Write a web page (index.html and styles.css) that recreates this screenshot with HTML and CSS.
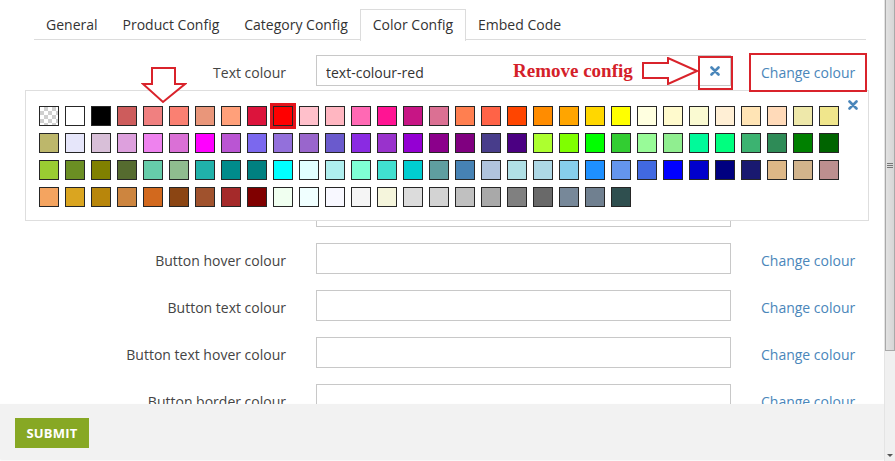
FILE: index.html
```html
<!DOCTYPE html>
<html lang="en">
<head>
<meta charset="utf-8">
<title>Color Config</title>
<link rel="stylesheet" href="styles.css">
</head>
<body>
<div class="frame">
  <div class="viewport">
    <nav class="tabs">
      <a class="tab">General</a>
      <a class="tab">Product Config</a>
      <a class="tab">Category Config</a>
      <a class="tab active">Color Config</a>
      <a class="tab">Embed Code</a>
    </nav>

    <form class="form">
      <div class="row">
        <label class="label">Text colour</label>
        <div class="field">
          <input class="input" type="text" value="text-colour-red">
          <button type="button" class="clear" aria-label="Remove">
            <svg width="10" height="10" viewBox="0 0 10 10"><path d="M1.5 1.5 L8.5 8.5 M8.5 1.5 L1.5 8.5" stroke="#4a86ba" stroke-width="2.6" stroke-linecap="round"/></svg>
          </button>
        </div>
        <a class="link">Change colour</a>
      </div>
      <div class="row">
        <label class="label">Background colour</label>
        <div class="field"><input class="input" type="text"></div>
        <a class="link">Change colour</a>
      </div>
      <div class="row">
        <label class="label">Link colour</label>
        <div class="field"><input class="input" type="text"></div>
        <a class="link">Change colour</a>
      </div>
      <div class="row">
        <label class="label">Button colour</label>
        <div class="field"><input class="input" type="text"></div>
        <span></span>
      </div>
      <div class="row">
        <label class="label">Button hover colour</label>
        <div class="field"><input class="input" type="text"></div>
        <a class="link">Change colour</a>
      </div>
      <div class="row">
        <label class="label">Button text colour</label>
        <div class="field"><input class="input" type="text"></div>
        <a class="link">Change colour</a>
      </div>
      <div class="row">
        <label class="label">Button text hover colour</label>
        <div class="field"><input class="input" type="text"></div>
        <a class="link">Change colour</a>
      </div>
      <div class="row">
        <label class="label">Button border colour</label>
        <div class="field"><input class="input" type="text"></div>
        <a class="link">Change colour</a>
      </div>
    </form>

    <div class="picker">
      <div class="swatches">
        <span class="sw sw-transparent"></span>
        <span class="sw" style="background:#ffffff"></span>
        <span class="sw" style="background:#000000"></span>
        <span class="sw" style="background:#cd5c5c"></span>
        <span class="sw" style="background:#f08080"></span>
        <span class="sw" style="background:#fa8072"></span>
        <span class="sw" style="background:#e9967a"></span>
        <span class="sw" style="background:#ffa07a"></span>
        <span class="sw" style="background:#dc143c"></span>
        <span class="sw selected" style="background:#ff0000"></span>
        <span class="sw" style="background:#ffc0cb"></span>
        <span class="sw" style="background:#ffb6c1"></span>
        <span class="sw" style="background:#ff69b4"></span>
        <span class="sw" style="background:#ff1493"></span>
        <span class="sw" style="background:#c71585"></span>
        <span class="sw" style="background:#db7093"></span>
        <span class="sw" style="background:#ff7f50"></span>
        <span class="sw" style="background:#ff6347"></span>
        <span class="sw" style="background:#ff4500"></span>
        <span class="sw" style="background:#ff8c00"></span>
        <span class="sw" style="background:#ffa500"></span>
        <span class="sw" style="background:#ffd700"></span>
        <span class="sw" style="background:#ffff00"></span>
        <span class="sw" style="background:#ffffe0"></span>
        <span class="sw" style="background:#fffacd"></span>
        <span class="sw" style="background:#fafad2"></span>
        <span class="sw" style="background:#ffefd5"></span>
        <span class="sw" style="background:#ffe4b5"></span>
        <span class="sw" style="background:#ffdab9"></span>
        <span class="sw" style="background:#eee8aa"></span>
        <span class="sw" style="background:#f0e68c"></span>

        <span class="sw" style="background:#bdb76b"></span>
        <span class="sw" style="background:#e6e6fa"></span>
        <span class="sw" style="background:#d8bfd8"></span>
        <span class="sw" style="background:#dda0dd"></span>
        <span class="sw" style="background:#ee82ee"></span>
        <span class="sw" style="background:#da70d6"></span>
        <span class="sw" style="background:#ff00ff"></span>
        <span class="sw" style="background:#ba55d3"></span>
        <span class="sw" style="background:#7b68ee"></span>
        <span class="sw" style="background:#9370db"></span>
        <span class="sw" style="background:#9966cc"></span>
        <span class="sw" style="background:#6a5acd"></span>
        <span class="sw" style="background:#8a2be2"></span>
        <span class="sw" style="background:#9932cc"></span>
        <span class="sw" style="background:#9400d3"></span>
        <span class="sw" style="background:#8b008b"></span>
        <span class="sw" style="background:#800080"></span>
        <span class="sw" style="background:#483d8b"></span>
        <span class="sw" style="background:#4b0082"></span>
        <span class="sw" style="background:#adff2f"></span>
        <span class="sw" style="background:#7fff00"></span>
        <span class="sw" style="background:#00ff00"></span>
        <span class="sw" style="background:#32cd32"></span>
        <span class="sw" style="background:#98fb98"></span>
        <span class="sw" style="background:#90ee90"></span>
        <span class="sw" style="background:#00fa9a"></span>
        <span class="sw" style="background:#00ff7f"></span>
        <span class="sw" style="background:#3cb371"></span>
        <span class="sw" style="background:#2e8b57"></span>
        <span class="sw" style="background:#008000"></span>
        <span class="sw" style="background:#006400"></span>

        <span class="sw" style="background:#9acd32"></span>
        <span class="sw" style="background:#6b8e23"></span>
        <span class="sw" style="background:#808000"></span>
        <span class="sw" style="background:#556b2f"></span>
        <span class="sw" style="background:#66cdaa"></span>
        <span class="sw" style="background:#8fbc8f"></span>
        <span class="sw" style="background:#20b2aa"></span>
        <span class="sw" style="background:#008b8b"></span>
        <span class="sw" style="background:#008080"></span>
        <span class="sw" style="background:#00ffff"></span>
        <span class="sw" style="background:#e0ffff"></span>
        <span class="sw" style="background:#afeeee"></span>
        <span class="sw" style="background:#7fffd4"></span>
        <span class="sw" style="background:#40e0d0"></span>
        <span class="sw" style="background:#00ced1"></span>
        <span class="sw" style="background:#5f9ea0"></span>
        <span class="sw" style="background:#4682b4"></span>
        <span class="sw" style="background:#b0c4de"></span>
        <span class="sw" style="background:#b0e0e6"></span>
        <span class="sw" style="background:#add8e6"></span>
        <span class="sw" style="background:#87ceeb"></span>
        <span class="sw" style="background:#1e90ff"></span>
        <span class="sw" style="background:#6495ed"></span>
        <span class="sw" style="background:#4169e1"></span>
        <span class="sw" style="background:#0000ff"></span>
        <span class="sw" style="background:#0000cd"></span>
        <span class="sw" style="background:#000080"></span>
        <span class="sw" style="background:#191970"></span>
        <span class="sw" style="background:#deb887"></span>
        <span class="sw" style="background:#d2b48c"></span>
        <span class="sw" style="background:#bc8f8f"></span>

        <span class="sw" style="background:#f4a460"></span>
        <span class="sw" style="background:#daa520"></span>
        <span class="sw" style="background:#b8860b"></span>
        <span class="sw" style="background:#cd853f"></span>
        <span class="sw" style="background:#d2691e"></span>
        <span class="sw" style="background:#8b4513"></span>
        <span class="sw" style="background:#a0522d"></span>
        <span class="sw" style="background:#a52a2a"></span>
        <span class="sw" style="background:#800000"></span>
        <span class="sw" style="background:#f0fff0"></span>
        <span class="sw" style="background:#f0ffff"></span>
        <span class="sw" style="background:#f8f8ff"></span>
        <span class="sw" style="background:#f5f5f5"></span>
        <span class="sw" style="background:#f5f5dc"></span>
        <span class="sw" style="background:#dcdcdc"></span>
        <span class="sw" style="background:#d3d3d3"></span>
        <span class="sw" style="background:#c0c0c0"></span>
        <span class="sw" style="background:#a9a9a9"></span>
        <span class="sw" style="background:#808080"></span>
        <span class="sw" style="background:#696969"></span>
        <span class="sw" style="background:#778899"></span>
        <span class="sw" style="background:#708090"></span>
        <span class="sw" style="background:#2f4f4f"></span>
      </div>
      <button type="button" class="picker-close" aria-label="Close">
        <svg width="10" height="10" viewBox="0 0 10 10"><path d="M1.5 1.5 L8.5 8.5 M8.5 1.5 L1.5 8.5" stroke="#4a86ba" stroke-width="2.6" stroke-linecap="round"/></svg>
      </button>
    </div>

    <!-- annotations -->
    <svg class="anno anno-down" width="46" height="37" viewBox="0 0 46 37">
      <polygon points="11,1 34,1 34,17 44,17 22,35 2,17 11,17" fill="#fff" stroke="#d9232b" stroke-width="2" stroke-linejoin="miter"/>
    </svg>
    <span class="anno anno-text">Remove config</span>
    <svg class="anno anno-right" width="57" height="28" viewBox="0 0 57 28">
      <polygon points="1,6 26,6 26,1 55,14 26,27 26,21 1,21" fill="#fff" stroke="#d9232b" stroke-width="2" stroke-linejoin="miter"/>
    </svg>
    <span class="anno anno-box anno-box-x"></span>
    <span class="anno anno-box anno-box-link"></span>

    <footer class="footer">
      <button type="button" class="submit">SUBMIT</button>
    </footer>
  </div>

  <div class="scrollbar">
    <div class="thumb"><span class="grip"></span></div>
    <div class="track"></div>
    <div class="arrow"></div>
  </div>
</div>
</body>
</html>
```

FILE: styles.css
```css
* { box-sizing: border-box; }

html, body {
  margin: 0;
  padding: 0;
  background: #fff;
}

body {
  font-family: "Open Sans", "Liberation Sans", sans-serif;
  font-size: 14px;
  color: #444;
  width: 895px;
  height: 461px;
  overflow: hidden;
}

.frame {
  display: flex;
  width: 895px;
  height: 461px;
}

.viewport {
  position: relative;
  width: 884px;
  height: 461px;
  overflow: hidden;
  background: #fff;
}

/* tabs */
.tabs {
  display: flex;
  margin: 9px 0 0 34px;
  width: 832px;
  border-bottom: 1px solid #dcdcdc;
  height: 31px;
}

.tab {
  display: block;
  padding: 0 11.5px;
  height: 31px;
  line-height: 30px;
  color: #333;
  border: 1px solid transparent;
  border-bottom: none;
  white-space: nowrap;
}

.tab:first-child {
  padding-left: 11px;
}

.tab.active {
  border-color: #dcdcdc;
  background: #fff;
  height: 32px;
}

/* form */
.form {
  display: flex;
  flex-direction: column;
  gap: 16px;
  padding-top: 15px;
}

.row {
  display: grid;
  grid-template-columns: 286px 415px auto;
  column-gap: 30px;
  align-items: center;
  height: 31px;
}

.label {
  text-align: right;
  color: #444;
  white-space: nowrap;
  padding-top: 4px;
}

.field {
  position: relative;
  height: 31px;
}

.input {
  display: block;
  width: 100%;
  height: 31px;
  border: 1px solid #c8c8c8;
  padding: 3px 9px 0;
  font-family: "Open Sans", "Liberation Sans", sans-serif;
  font-size: 14px;
  color: #333;
  background: #fff;
  outline: none;
}

.clear {
  position: absolute;
  right: 11px;
  top: 11px;
  width: 10px;
  height: 10px;
  padding: 0;
  border: 0;
  background: transparent;
  display: flex;
}

.link {
  color: #4a86ba;
  white-space: nowrap;
  padding-top: 4px;
}

/* picker */
.picker {
  position: absolute;
  left: 25px;
  top: 90px;
  width: 844px;
  height: 131px;
  background: #fff;
  border: 1px solid #dedede;
  padding: 15px 0 0 13px;
}

.swatches {
  display: grid;
  grid-template-columns: repeat(31, 20px);
  grid-auto-rows: 20px;
  column-gap: 6px;
  row-gap: 7px;
}

.sw {
  display: block;
  width: 20px;
  height: 20px;
  border: 1px solid #262626;
}

.sw-transparent {
  background-color: #fff;
  background-image:
    linear-gradient(45deg, #cfcfcf 25%, transparent 25%, transparent 75%, #cfcfcf 75%),
    linear-gradient(45deg, #cfcfcf 25%, transparent 25%, transparent 75%, #cfcfcf 75%);
  background-size: 8px 8px;
  background-position: 0 0, 4px 4px;
}

.sw.selected {
  outline: 3px solid #e3141c;
  outline-offset: 0;
}

.picker-close {
  position: absolute;
  right: 10px;
  top: 9px;
  width: 10px;
  height: 10px;
  padding: 0;
  border: 0;
  background: transparent;
  display: flex;
}

/* annotations */
.anno {
  position: absolute;
}

.anno-down {
  left: 141px;
  top: 67px;
}

.anno-right {
  left: 642px;
  top: 57px;
}

.anno-text {
  left: 513px;
  top: 60px;
  font-family: "Liberation Serif", "Times New Roman", serif;
  font-weight: bold;
  font-size: 19px;
  line-height: 22px;
  color: #d42029;
  white-space: nowrap;
}

.anno-box {
  border: 2px solid #d9232b;
}

.anno-box-x {
  left: 698px;
  top: 56px;
  width: 35px;
  height: 34px;
}

.anno-box-link {
  left: 749px;
  top: 53px;
  width: 118px;
  height: 39px;
}

/* footer */
.footer {
  position: absolute;
  left: 0;
  top: 404px;
  width: 884px;
  height: 55px;
  background: #f2f2f2;
  box-shadow: 0 1px 2px rgba(0, 0, 0, 0.08);
  padding: 14px 0 0 15px;
}

.submit {
  display: block;
  width: 74px;
  height: 30px;
  border: 0;
  background: #87a824;
  color: #fff;
  font-family: "Open Sans", "Liberation Sans", sans-serif;
  font-weight: bold;
  font-size: 13px;
  letter-spacing: 0.2px;
  padding: 0;
}

/* scrollbar */
.scrollbar {
  width: 11px;
  height: 461px;
  display: flex;
  flex-direction: column;
  background: #f0f0f0;
  border-left: 1px solid #e4e4e4;
}

.thumb {
  height: 351px;
  background: linear-gradient(to right, #e2e2e2, #d6d6d6);
  border: 1px solid #a9a9a9;
  border-top: 0;
  display: flex;
  align-items: center;
  justify-content: center;
}

.grip {
  display: block;
  width: 6px;
  height: 5px;
  border-top: 1px solid #777;
  border-bottom: 1px solid #777;
  background: linear-gradient(#777, #777) center / 6px 1px no-repeat;
  margin-top: -20px;
}

.track {
  flex: 1;
}

.arrow {
  height: 12px;
  display: flex;
  align-items: center;
  justify-content: center;
}

.arrow::before {
  content: "";
  border-left: 3px solid transparent;
  border-right: 3px solid transparent;
  border-top: 3px solid #555;
}
```
